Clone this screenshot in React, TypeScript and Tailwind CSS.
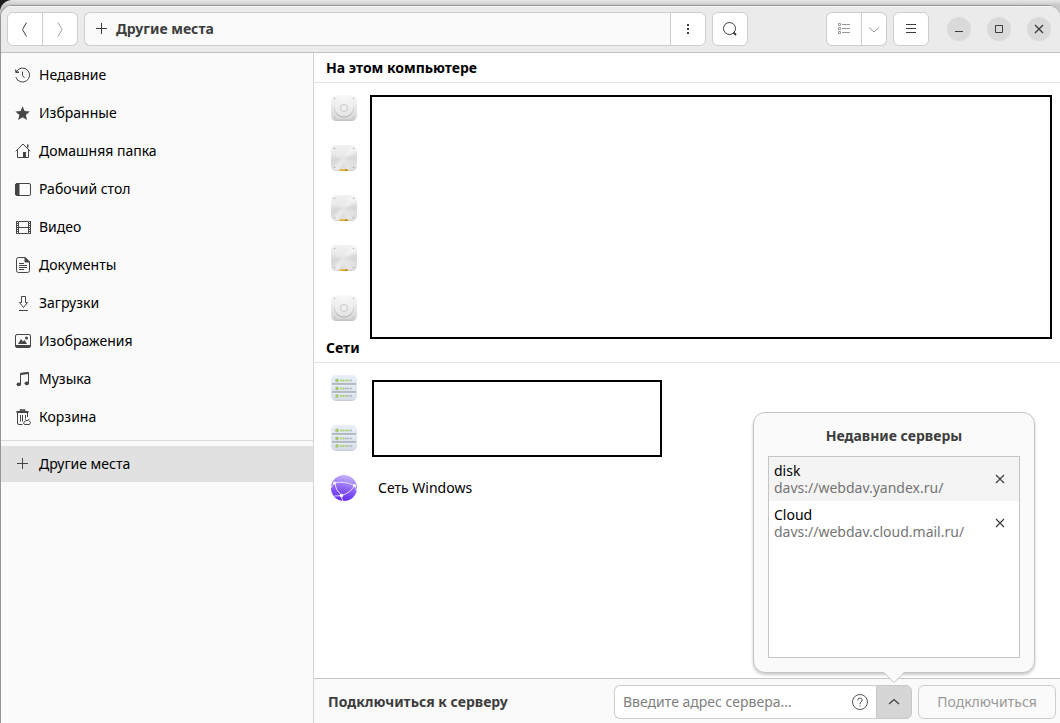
import React, { useState } from "react";

type IconProps = { children: React.ReactNode; className?: string };

function Icon({ children, className = "" }: IconProps) {
  return (
    <svg
      viewBox="0 0 16 16"
      width="16"
      height="16"
      fill="none"
      stroke="currentColor"
      strokeWidth="1"
      aria-hidden="true"
      className={`shrink-0 ${className}`}
    >
      {children}
    </svg>
  );
}

const PlusIcon = () => (
  <Icon>
    <path d="M7.500 2v11M2 7.500h11" />
  </Icon>
);

const icons = {
  recent: (
    <Icon>
      <path d="M.9 10.200A7 7 0 1 0 1.700 4.200" />
      <path d="M0 2.500h1v1h1v1h2v1.500H.5z" fill="currentColor" stroke="none" />
      <path d="M7.500 4.500v4l2 2.400" />
    </Icon>
  ),
  star: (
    <Icon>
      <path
        fill="currentColor"
        stroke="none"
        d="M7.600 1.200l2 4.900 5.200.4-4 3.400 1.300 5.100-4.500-2.800L3.100 15l1.300-5.100-4-3.400 5.200-.4z"
      />
    </Icon>
  ),
  home: (
    <Icon>
      <path d="M.8 8.300L8 1l7.200 7.300M2.500 7v7.500h11V7" />
      <path d="M12 1.500v3h1.500v-3z" fill="currentColor" stroke="none" />
      <path d="M8 9h3v5.500H8z" fill="currentColor" stroke="none" />
    </Icon>
  ),
  desktop: (
    <Icon>
      <rect x=".5" y="2.500" width="15" height="12" rx="1.500" />
      <path d="M1 3h3v11H1z" fill="currentColor" />
    </Icon>
  ),
  video: (
    <Icon>
      <path d="M3.500 2.500h10v12h-10zM3.500 8.500h10" />
      <path d="M2 2v13M15 2v13" strokeWidth="2" strokeDasharray="1 1" />
      <path d="M1.500 2v13M15.500 2v13" />
    </Icon>
  ),
  documents: (
    <Icon>
      <path d="M10 .5H3.500a2 2 0 0 0-2 2v11a2 2 0 0 0 2 2h9a2 2 0 0 0 2-2V5z" />
      <path d="M10 .5V5h4.500z" fill="currentColor" />
      <path d="M4 6.500h5M4 8.500h8M4 10.500h8M4 12.500h5" />
    </Icon>
  ),
  downloads: (
    <Icon>
      <path d="M6.500 1.500h4v6h2l-4 5-4-5h2zM4 15.500h9" />
    </Icon>
  ),
  images: (
    <Icon>
      <rect x=".5" y="1.500" width="15" height="13" rx="1.500" />
      <path d="M1 13h14" strokeWidth="2" />
      <path d="M3 11l3-5 2 2.500L9.500 7l2.500 4z" fill="currentColor" stroke="none" />
      <circle cx="11.500" cy="5" r="1.500" fill="currentColor" stroke="none" />
    </Icon>
  ),
  music: (
    <Icon>
      <path d="M5.500 13V2.500l8-1V12" />
      <path d="M5.500 3l8-1" strokeWidth="2" />
      <ellipse cx="3.800" cy="13.300" rx="2.200" ry="1.900" fill="currentColor" stroke="none" />
      <ellipse cx="11.800" cy="12.300" rx="2.200" ry="1.900" fill="currentColor" stroke="none" />
    </Icon>
  ),
  trash: (
    <Icon>
      <path d="M1.500 3h12" strokeWidth="2" />
      <path d="M5.500 2.500V1h4v1.500" strokeWidth="1.500" />
      <path d="M2.500 4v10q0 1.500 1.500 1.500h3.500M12.500 4v4" />
      <path d="M5.500 6v6.500M7.500 6v6.500M10.500 6v3.500" />
      <path d="M10.500 11.500L8.500 14l1 1.500h5l1-2-1.500-2" />
      <path d="M10 10.500l2 1.500 2.500-2" />
    </Icon>
  ),
  other: <PlusIcon />,
};

const places: { icon: keyof typeof icons; label: string }[] = [
  { icon: "recent", label: "Недавние" },
  { icon: "star", label: "Избранные" },
  { icon: "home", label: "Домашняя папка" },
  { icon: "desktop", label: "Рабочий стол" },
  { icon: "video", label: "Видео" },
  { icon: "documents", label: "Документы" },
  { icon: "downloads", label: "Загрузки" },
  { icon: "images", label: "Изображения" },
  { icon: "music", label: "Музыка" },
  { icon: "trash", label: "Корзина" },
];

function Screws() {
  return (
    <g fill="#b0b0b0">
      <circle cx="3.500" cy="3.500" r=".8" />
      <circle cx="22.500" cy="3.500" r=".8" />
      <circle cx="3.500" cy="22.500" r=".8" />
      <circle cx="22.500" cy="22.500" r=".8" />
    </g>
  );
}

function DiskIcon() {
  return (
    <svg viewBox="0 0 26 26" width="26" height="26" aria-hidden="true">
      <defs>
        <linearGradient id="disk-body" x1="0" y1="0" x2="0" y2="1">
          <stop offset="0" stopColor="#fafafa" />
          <stop offset=".9" stopColor="#d8d8d8" />
          <stop offset="1" stopColor="#bcbcbc" />
        </linearGradient>
        <linearGradient id="disk-plate" x1="0" y1="0" x2="0" y2="1">
          <stop offset="0" stopColor="#f6f6f6" />
          <stop offset="1" stopColor="#e4e4e4" />
        </linearGradient>
      </defs>
      <rect width="26" height="26" rx="5" fill="url(#disk-body)" />
      <Screws />
      <circle cx="13" cy="13" r="9.500" fill="#b0b0b0" />
      <circle cx="13" cy="12.200" r="9.400" fill="url(#disk-plate)" />
      <circle cx="13" cy="13" r="3.600" fill="#ededed" stroke="#c4c4c4" strokeWidth=".8" />
    </svg>
  );
}

function SsdIcon() {
  return (
    <svg viewBox="0 0 26 26" width="26" height="26" aria-hidden="true">
      <defs>
        <linearGradient id="ssd-body" x1="0" y1="0" x2="0" y2="1">
          <stop offset="0" stopColor="#f2f2f2" />
          <stop offset=".93" stopColor="#dcdcdc" />
          <stop offset="1" stopColor="#c0c0c0" />
        </linearGradient>
        <filter id="ssd-soft">
          <feGaussianBlur stdDeviation="1" />
        </filter>
        <clipPath id="ssd-clip">
          <rect width="26" height="26" rx="5" />
        </clipPath>
      </defs>
      <rect width="26" height="26" rx="5" fill="url(#ssd-body)" />
      <g clipPath="url(#ssd-clip)">
        <g filter="url(#ssd-soft)">
          <path d="M12 13.500L27 8v9z" fill="#b0b0b0" opacity=".25" />
          <path d="M12 13.500L0 11v10z" fill="#b0b0b0" opacity=".25" />
          <path d="M12 13.500L22 0h5v4z" fill="#fff" opacity=".4" />
          <path d="M12 13.500L1 24l7 3z" fill="#fff" opacity=".4" />
          <path d="M12 13.500L16 26h8z" fill="#fff" opacity=".25" />
        </g>
      </g>
      <Screws />
      <path d="M8 26q0-1.800 1.800-1.800h6.400Q18 24.200 18 26z" fill="#e9b030" />
      <path d="M14 24.200h2V26h-2z" fill="#a88a4a" />
    </svg>
  );
}

function ServerIcon() {
  return (
    <svg viewBox="0 0 26 26" width="26" height="26" aria-hidden="true">
      <defs>
        <linearGradient id="server-body" x1="0" y1="0" x2="0" y2="1">
          <stop offset="0" stopColor="#e8eff8" />
          <stop offset=".93" stopColor="#d8dee8" />
          <stop offset="1" stopColor="#c0c6d0" />
        </linearGradient>
      </defs>
      <rect width="26" height="26" rx="5" fill="url(#server-body)" />
      <path d="M1 9h24M1 17h24" stroke="#b2b7c0" strokeWidth="2" />
      <path d="M1 10.400h24M1 18.400h24" stroke="#eff3f8" strokeWidth=".8" />
      {[5.5, 13.500, 21].map((y) => (
        <g key={y}>
          <circle cx="6" cy={y} r="1.900" fill="#b9c2ae" />
          <circle cx="6" cy={y} r="1.200" fill="#9bd44b" />
          <path d={`M9 ${y}h12`} stroke="#a8aeb6" strokeWidth="1.400" strokeDasharray="1.700 .8" />
          <path
            d={`M9 ${y}h${y === 5.5 ? 9.5 : y === 13.5 ? 4.5 : 7}`}
            stroke="#aee05c"
            strokeWidth="1.400"
            strokeDasharray="1.700 .8"
          />
        </g>
      ))}
    </svg>
  );
}

function NetworkIcon() {
  return (
    <svg viewBox="0 0 26 26" width="26" height="26" aria-hidden="true">
      <defs>
        <linearGradient id="net-body" x1=".6" y1="0" x2=".4" y2="1">
          <stop offset="0" stopColor="#c8b5f8" />
          <stop offset=".5" stopColor="#8f66f5" />
          <stop offset="1" stopColor="#6428f2" />
        </linearGradient>
      </defs>
      <circle cx="13" cy="13" r="13" fill="url(#net-body)" />
      <g fill="none" stroke="#e9e0ff" strokeWidth="1">
        <path d="M3.500 8Q13 5.500 23.500 10.500M3.500 8Q4.500 15 10.500 20.500M23.500 10.500Q19.500 18 10.500 20.500M10.500 20.500Q10.500 24 12 26M3.500 8Q.8 10 .5 13M23.500 10.500Q25.500 13 25.300 16M10.500 20.500Q6 21 3.500 21" />
      </g>
      <g fill="#fff">
        <circle cx="3.500" cy="8" r="1.500" />
        <circle cx="23.500" cy="10.500" r="1.500" />
        <circle cx="10.500" cy="20.500" r="1.700" />
      </g>
    </svg>
  );
}

function Section({ title, children }: { title: string; children: React.ReactNode }) {
  return (
    <section className="relative">
      <h2 className="h-[30px] border-b border-[#e4e4e4] px-3 text-sm leading-[30px] font-bold text-black">{title}</h2>
      <ul>{children}</ul>
    </section>
  );
}

function Row({ icon, label }: { icon: React.ReactNode; label?: string }) {
  return (
    <li className="flex h-[50px] items-center gap-[21px] pl-[17px]">
      {icon}
      {label && <span>{label}</span>}
    </li>
  );
}

const servers = [
  { name: "disk", url: "davs://webdav.yandex.ru/" },
  { name: "Cloud", url: "davs://webdav.cloud.mail.ru/" },
];

function RecentServers() {
  return (
    <div
      role="dialog"
      aria-labelledby="recent-servers"
      className="absolute bottom-full left-1/2 mb-3 w-[282px] -translate-x-1/2 rounded-xl border border-[#c4c4c4] bg-[#fafafa] px-3.5 pb-3.5 shadow-[0_2px_3px_rgba(0,0,0,0.2)]"
    >
      <h3 id="recent-servers" className="h-[43px] text-center text-sm leading-[46px] font-bold text-[#3d3d3d]">
        Недавние серверы
      </h3>
      <ul className="h-[202px] border border-[#c4c4c4] bg-white">
        {servers.map((server) => (
          <li key={server.name} className="flex h-11 items-center justify-between pr-[11px] pl-[5px] first:bg-[#f4f4f4]">
            <div className="leading-[17px]">
              <div className="text-black">{server.name}</div>
              <div className="text-[#757575]">{server.url}</div>
            </div>
            <button type="button" aria-label="Удалить" className="text-[#3d3d3d]">
              <Icon>
                <path d="M4 4l8 8M12 4l-8 8" strokeWidth="1.200" />
              </Icon>
            </button>
          </li>
        ))}
      </ul>
      <svg
        viewBox="0 0 22 12"
        width="22"
        height="12"
        aria-hidden="true"
        className="absolute top-full left-1/2 -translate-x-1/2"
      >
        <path d="M0 -1L11 10.500L22 -1z" fill="#fafafa" />
        <path d="M0 0L11 10.500L22 0" fill="none" stroke="#c4c4c4" />
      </svg>
    </div>
  );
}

const button = "flex h-[34px] items-center justify-center rounded-md border border-[#cdcdcd] bg-white";
const circle = "flex size-6 items-center justify-center rounded-full bg-[#dadada]";

export default function App() {
  const [address, setAddress] = useState("");
  const [open, setOpen] = useState(true);

  return (
    <div className="bg-[#1c1c1c] font-['Noto_Sans','Open_Sans',sans-serif] text-sm text-black">
      <div className="flex h-screen flex-col rounded-tl-xl bg-linear-to-b from-[#e8e8e8] to-[#c8c8c8] to-[5px] pt-[5px]">
        <div className="flex min-h-0 flex-1 flex-col overflow-hidden rounded-t-xl border-t border-l border-[#979797] bg-[#fafafa]">
          <header className="flex h-[47px] shrink-0 items-center border-b border-[#c0c0c0] bg-[#ebebeb] pr-[9px] pl-1.5 text-[#3d3d3d] shadow-[inset_0_1px_0_#f8f8f8]">
            <div className="flex">
              <button type="button" aria-label="Назад" className={`${button} w-9 rounded-r-none pr-0.5`}>
                <Icon>
                  <path d="M10.500 1.500l-4 7 4 7" />
                </Icon>
              </button>
              <button
                type="button"
                aria-label="Вперёд"
                disabled
                className={`${button} w-[35px] rounded-l-none border-l-0 text-[#a0a0a0]`}
              >
                <Icon>
                  <path d="M6 1.500l4 7-4 7" />
                </Icon>
              </button>
            </div>
            <div className="ml-1.5 flex flex-1">
              <div className="flex h-[34px] flex-1 items-center gap-1.5 rounded-l-md border border-r-0 border-[#cdcdcd] bg-[#fafafa] pl-[9px]">
                <PlusIcon />
                <h1 className="font-bold">Другие места</h1>
              </div>
              <button type="button" aria-label="Меню папки" className={`${button} w-9 rounded-l-none`}>
                <Icon>
                  <path d="M7 3h2v2H7zM7 7h2v2H7zM7 11h2v2H7z" fill="currentColor" stroke="none" />
                </Icon>
              </button>
            </div>
            <button type="button" aria-label="Поиск" className={`${button} ml-1.5 w-9`}>
              <Icon>
                <circle cx="7.500" cy="7.500" r="6" />
                <path d="M11.500 11.500l2.500 2.500" strokeWidth="2" />
              </Icon>
            </button>
            <div className="ml-[78px] flex text-[#999]">
              <button type="button" aria-label="Список" className={`${button} w-9 rounded-r-none`}>
                <Icon>
                  <path d="M2.500 2.500h2v2h-2zM2.500 6.500h2v2h-2zM2.500 10.500h2v2h-2zM6 3.500h8M6 7.500h8M6 11.500h8" />
                </Icon>
              </button>
              <button
                type="button"
                aria-label="Параметры вида"
                className={`${button} w-[25px] rounded-l-none border-l-0`}
              >
                <Icon>
                  <path d="M3 6.500l5 4.500 5-4.500" />
                </Icon>
              </button>
            </div>
            <button type="button" aria-label="Главное меню" className={`${button} ml-1.5 w-9`}>
              <Icon>
                <path d="M3 3.500h10M3 7.500h10M3 11.500h10" />
              </Icon>
            </button>
            <div className="ml-[18px] flex gap-4">
              <button type="button" aria-label="Свернуть" className={circle}>
                <Icon>
                  <path d="M4 10.500h8" />
                </Icon>
              </button>
              <button type="button" aria-label="Развернуть" className={circle}>
                <Icon>
                  <path d="M4.500 4.500h7v7h-7z" />
                </Icon>
              </button>
              <button type="button" aria-label="Закрыть" className={circle}>
                <Icon>
                  <path d="M4 4l8 8M12 4l-8 8" strokeWidth="1.400" />
                </Icon>
              </button>
            </div>
          </header>

          <div className="flex min-h-0 flex-1">
            <nav className="w-[313px] shrink-0 border-r border-[#d4d4d4] pt-1">
              <ul className="flex flex-col gap-0.5">
                {places.map((place) => (
                  <li key={place.label}>
                    <a href="#" className="flex h-9 items-center gap-2 pl-3.5">
                      <span className="text-[#454545]">{icons[place.icon]}</span>
                      {place.label}
                    </a>
                  </li>
                ))}
              </ul>
              <hr className="mt-[5px] mb-[5px] border-[#dcdcdc]" />
              <a href="#" aria-current="page" className="flex h-9 items-center gap-2 bg-[#e1e1e1] pl-3.5">
                <span className="text-[#454545]">{icons.other}</span>
                Другие места
              </a>
            </nav>

            <main className="flex min-w-0 flex-1 flex-col bg-white">
              <div className="min-h-0 flex-1">
                <Section title="На этом компьютере">
                  <Row icon={<DiskIcon />} />
                  <Row icon={<SsdIcon />} />
                  <Row icon={<SsdIcon />} />
                  <Row icon={<SsdIcon />} />
                  <Row icon={<DiskIcon />} />
                  <li
                    aria-hidden="true"
                    className="absolute top-[42px] right-2 left-14 h-[244px] border-2 border-black bg-white"
                  />
                </Section>
                <Section title="Сети">
                  <Row icon={<ServerIcon />} />
                  <Row icon={<ServerIcon />} />
                  <Row icon={<NetworkIcon />} label="Сеть Windows" />
                  <li
                    aria-hidden="true"
                    className="absolute top-[47px] left-[58px] h-[77px] w-[290px] border-2 border-black bg-white"
                  />
                </Section>
              </div>

              <footer className="flex h-[45px] shrink-0 items-center border-t border-[#c8c8c8] bg-[#fafafa] pt-0.5 pr-1 pl-3.5">
                <label htmlFor="server-address" className="flex-1 font-bold text-[#3d3d3d]">
                  Подключиться к серверу
                </label>
                <div className="flex h-[34px] w-[262px] items-center rounded-l-md border border-r-0 border-[#cdcdcd] bg-white pr-2 pl-2">
                  <input
                    id="server-address"
                    type="text"
                    value={address}
                    onChange={(event) => setAddress(event.target.value)}
                    placeholder="Введите адрес сервера…"
                    className="min-w-0 flex-1 outline-none placeholder:text-[#808080]"
                  />
                  <button type="button" aria-label="Справка" className="text-[#555]">
                    <Icon>
                      <circle cx="8" cy="8" r="7.500" />
                      <path d="M5.800 6.300q0-2.300 2.200-2.300t2.200 2q0 1.200-1.200 2T8 10.200M8 11.300v1.200" />
                    </Icon>
                  </button>
                </div>
                <div className="relative">
                  <button
                    type="button"
                    aria-label="Недавние серверы"
                    aria-expanded={open}
                    onClick={() => setOpen(!open)}
                    className="flex h-[34px] w-9 items-center justify-center rounded-r-md border border-[#c8c8c8] bg-[#d6d6d6] text-[#3d3d3d]"
                  >
                    <Icon>
                      <path d="M3 10l5-4.500 5 4.500" strokeWidth="1.200" />
                    </Icon>
                  </button>
                  {open && <RecentServers />}
                </div>
                <button
                  type="button"
                  disabled
                  className="ml-1.5 h-[34px] w-[138px] rounded-md border border-[#cdcdcd] bg-[#fafafa] text-[#999]"
                >
                  Подключиться
                </button>
              </footer>
            </main>
          </div>
        </div>
      </div>
    </div>
  );
}
